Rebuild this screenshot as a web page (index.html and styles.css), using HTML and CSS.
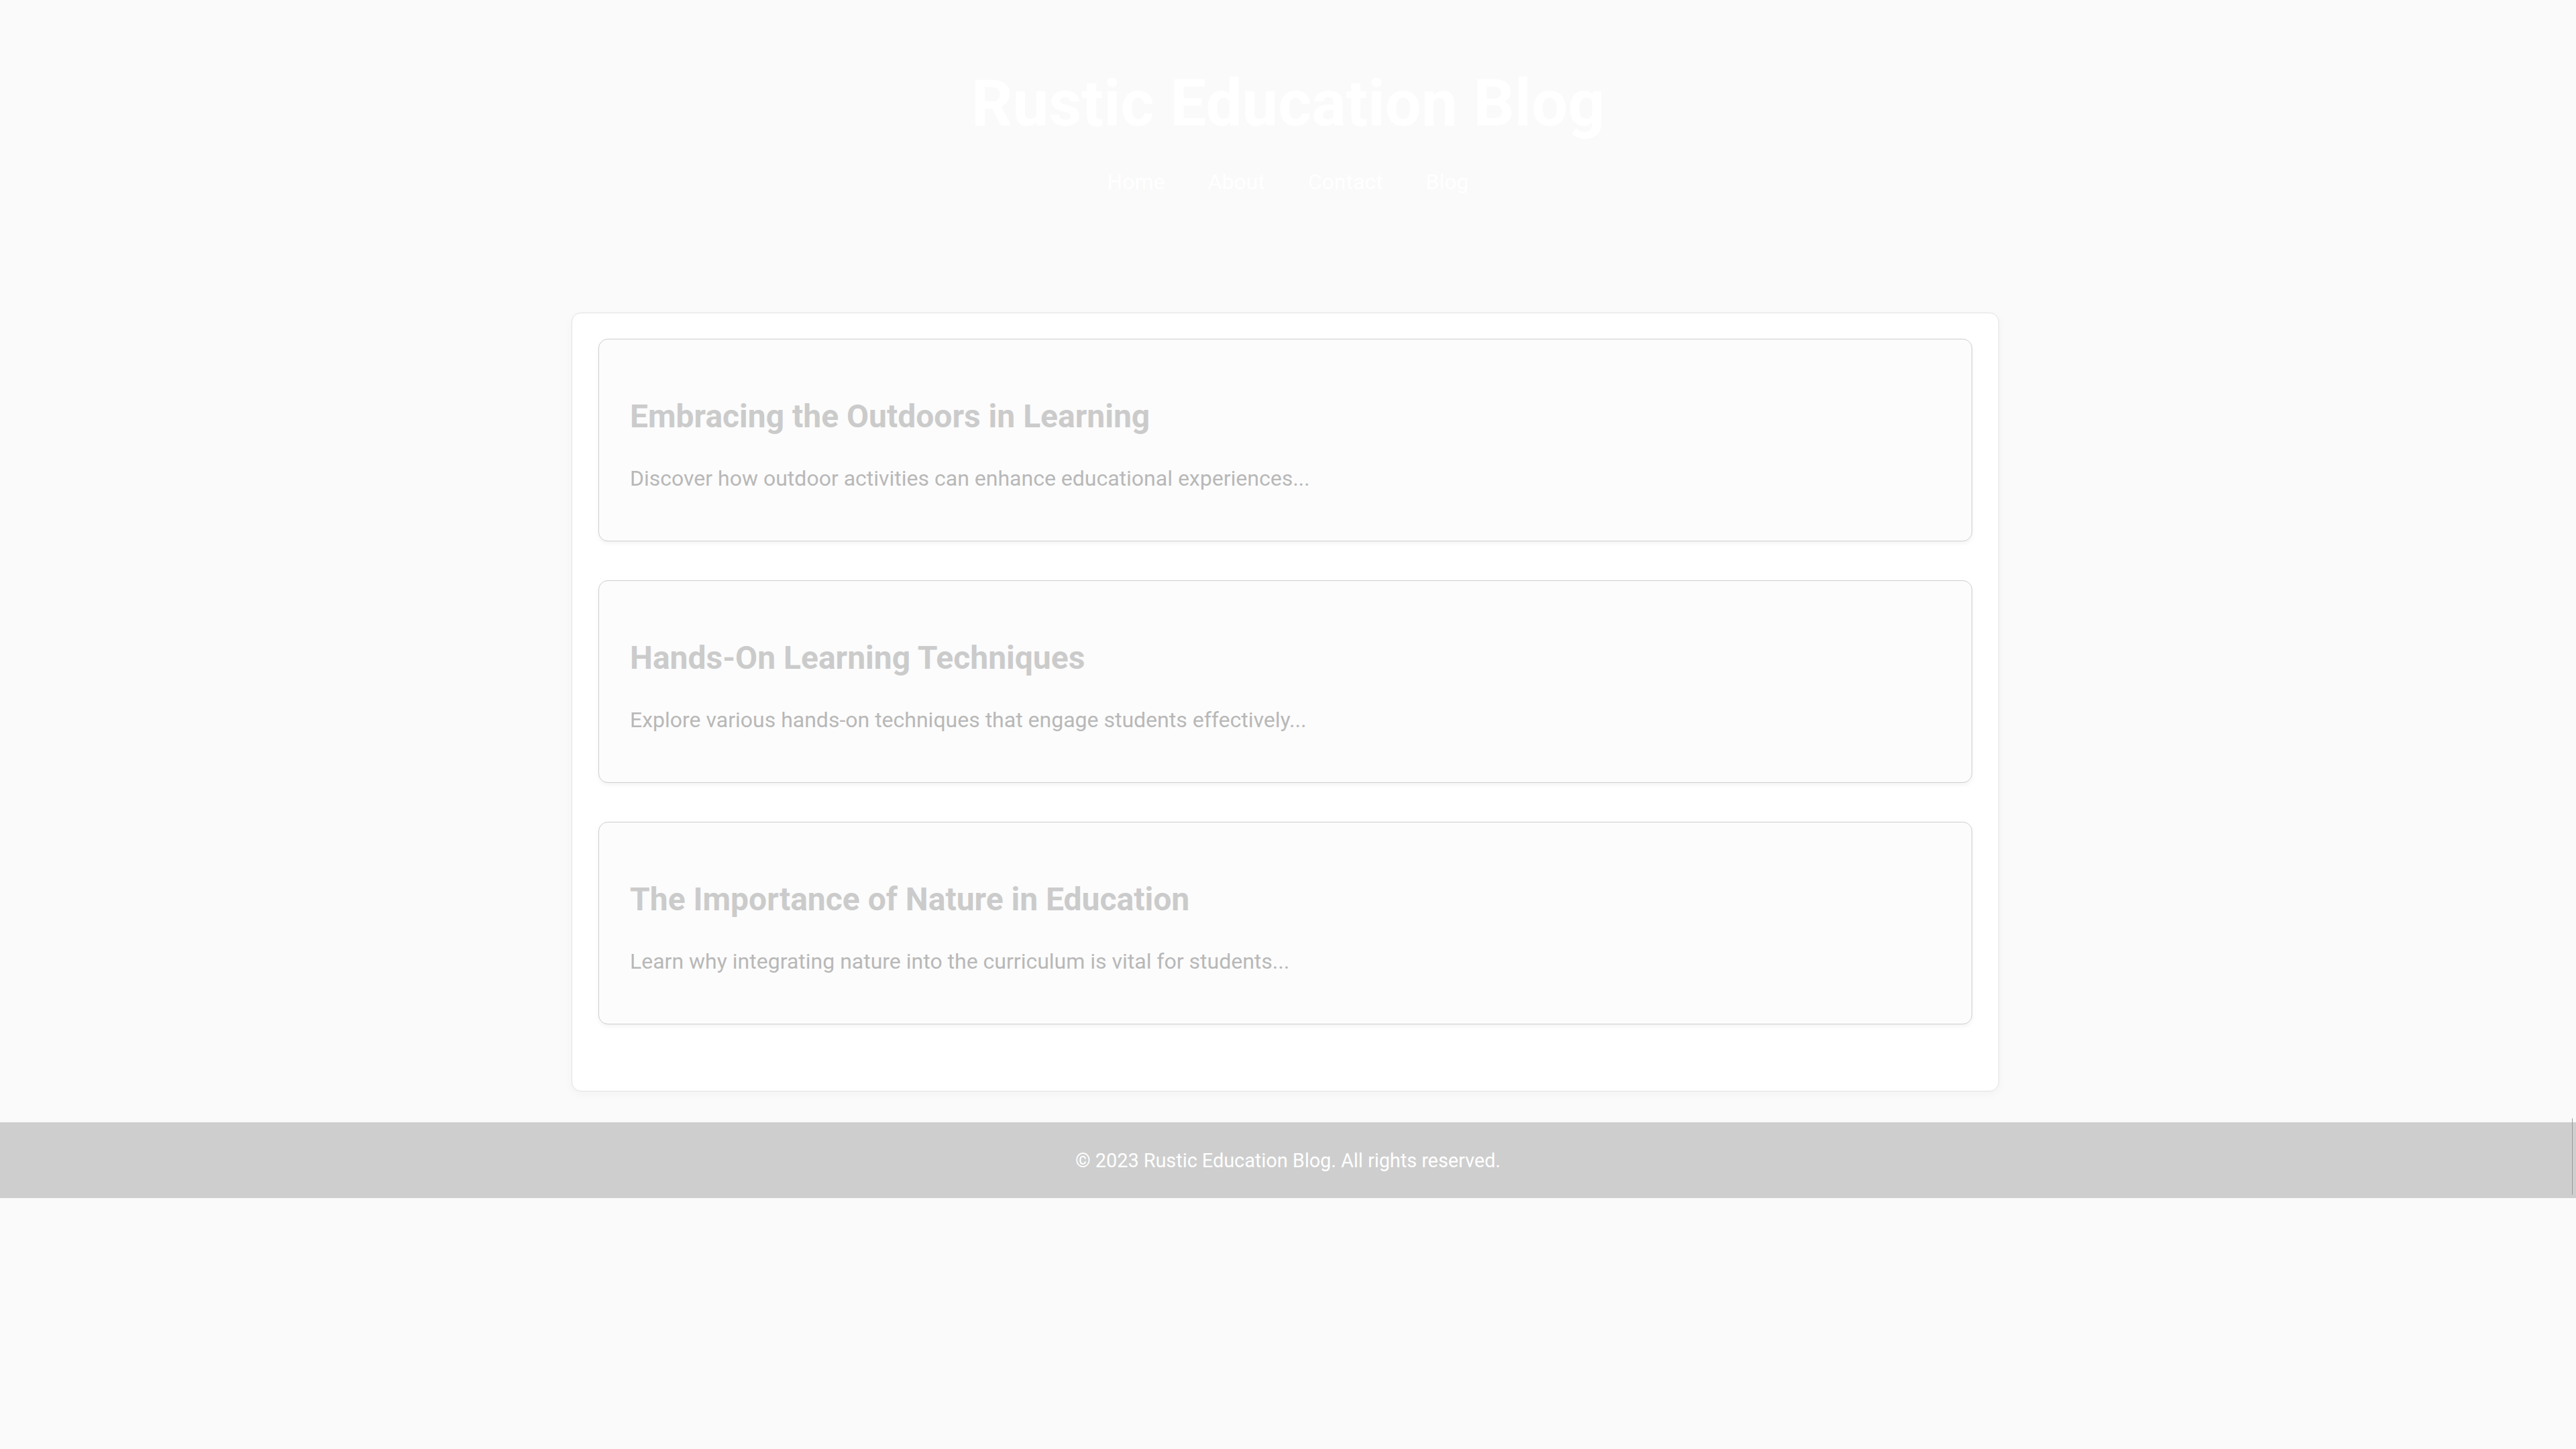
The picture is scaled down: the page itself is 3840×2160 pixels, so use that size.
FILE: index.html
```html
<!DOCTYPE html>
<html lang="en">
<head>
<meta charset="utf-8">
<title>Rustic Education Blog</title>
<link rel="stylesheet" href="styles.css">
</head>
<body>
<header class="site-header">
  <h1 class="site-title">Rustic Education Blog</h1>
  <nav class="site-nav">
    <a href="#">Home</a>
    <a href="#">About</a>
    <a href="#">Contact</a>
    <a href="#">Blog</a>
  </nav>
</header>
<main class="container">
  <article class="post">
    <h2 class="post-title">Embracing the Outdoors in Learning</h2>
    <p class="post-excerpt">Discover how outdoor activities can enhance educational experiences...</p>
  </article>
  <article class="post">
    <h2 class="post-title">Hands-On Learning Techniques</h2>
    <p class="post-excerpt">Explore various hands-on techniques that engage students effectively...</p>
  </article>
  <article class="post">
    <h2 class="post-title">The Importance of Nature in Education</h2>
    <p class="post-excerpt">Learn why integrating nature into the curriculum is vital for students...</p>
  </article>
</main>
<footer class="site-footer">
  <p>&copy; 2023 Rustic Education Blog. All rights reserved.</p>
</footer>
</body>
</html>
```

FILE: styles.css
```css
html, body {
  margin: 0;
  padding: 0;
}
body {
  background: #fafafa;
  font-family: Roboto, "Liberation Sans", Arial, sans-serif;
  color: #c4c4c4;
}
.site-header {
  padding-top: 98px;
  text-align: center;
}
.site-title {
  margin: 0;
  font-size: 96px;
  font-weight: 700;
  color: #ffffff;
  line-height: 1.172;
}
.site-nav {
  margin-top: 42px;
  display: flex;
  justify-content: center;
  gap: 64px;
}
.site-nav a {
  font-size: 32px;
  color: #ffffff;
  text-decoration: none;
  line-height: 1.172;
}
.container {
  width: 2048px;
  margin: 176px 0 46px calc(50% - 1068px);
  padding: 38px 39px 41px;
  background: #ffffff;
  border: 1px solid #e2e2e2;
  border-radius: 14px;
  box-shadow: 0 4px 14px rgba(0,0,0,0.035);
}
.post {
  background: #fcfcfc;
  border: 1px solid #cfcfcf;
  border-radius: 14px;
  box-shadow: 0 3px 6px rgba(0,0,0,0.05);
  padding: 87px 46px 74px;
  height: 302px;
  box-sizing: border-box;
  margin-bottom: 58px;
}
.post-title {
  margin: 0;
  font-size: 48px;
  font-weight: 700;
  color: #cbcbcb;
  line-height: 1.172;
}
.post-excerpt {
  margin: 46px 0 0;
  font-size: 32px;
  color: #b8b8b8;
  line-height: 1.172;
}
.site-footer {
  position: relative;
  background: #cecece;
  height: 113px;
  display: flex;
  align-items: center;
  justify-content: center;
}
.site-footer p {
  margin: 0;
  font-size: 28.8px;
  color: #ffffff;
}
.site-footer::after {
  content: "";
  position: absolute;
  right: 5px;
  top: -6px;
  width: 1px;
  height: 114px;
  background: #9a9a9a;
}
```
